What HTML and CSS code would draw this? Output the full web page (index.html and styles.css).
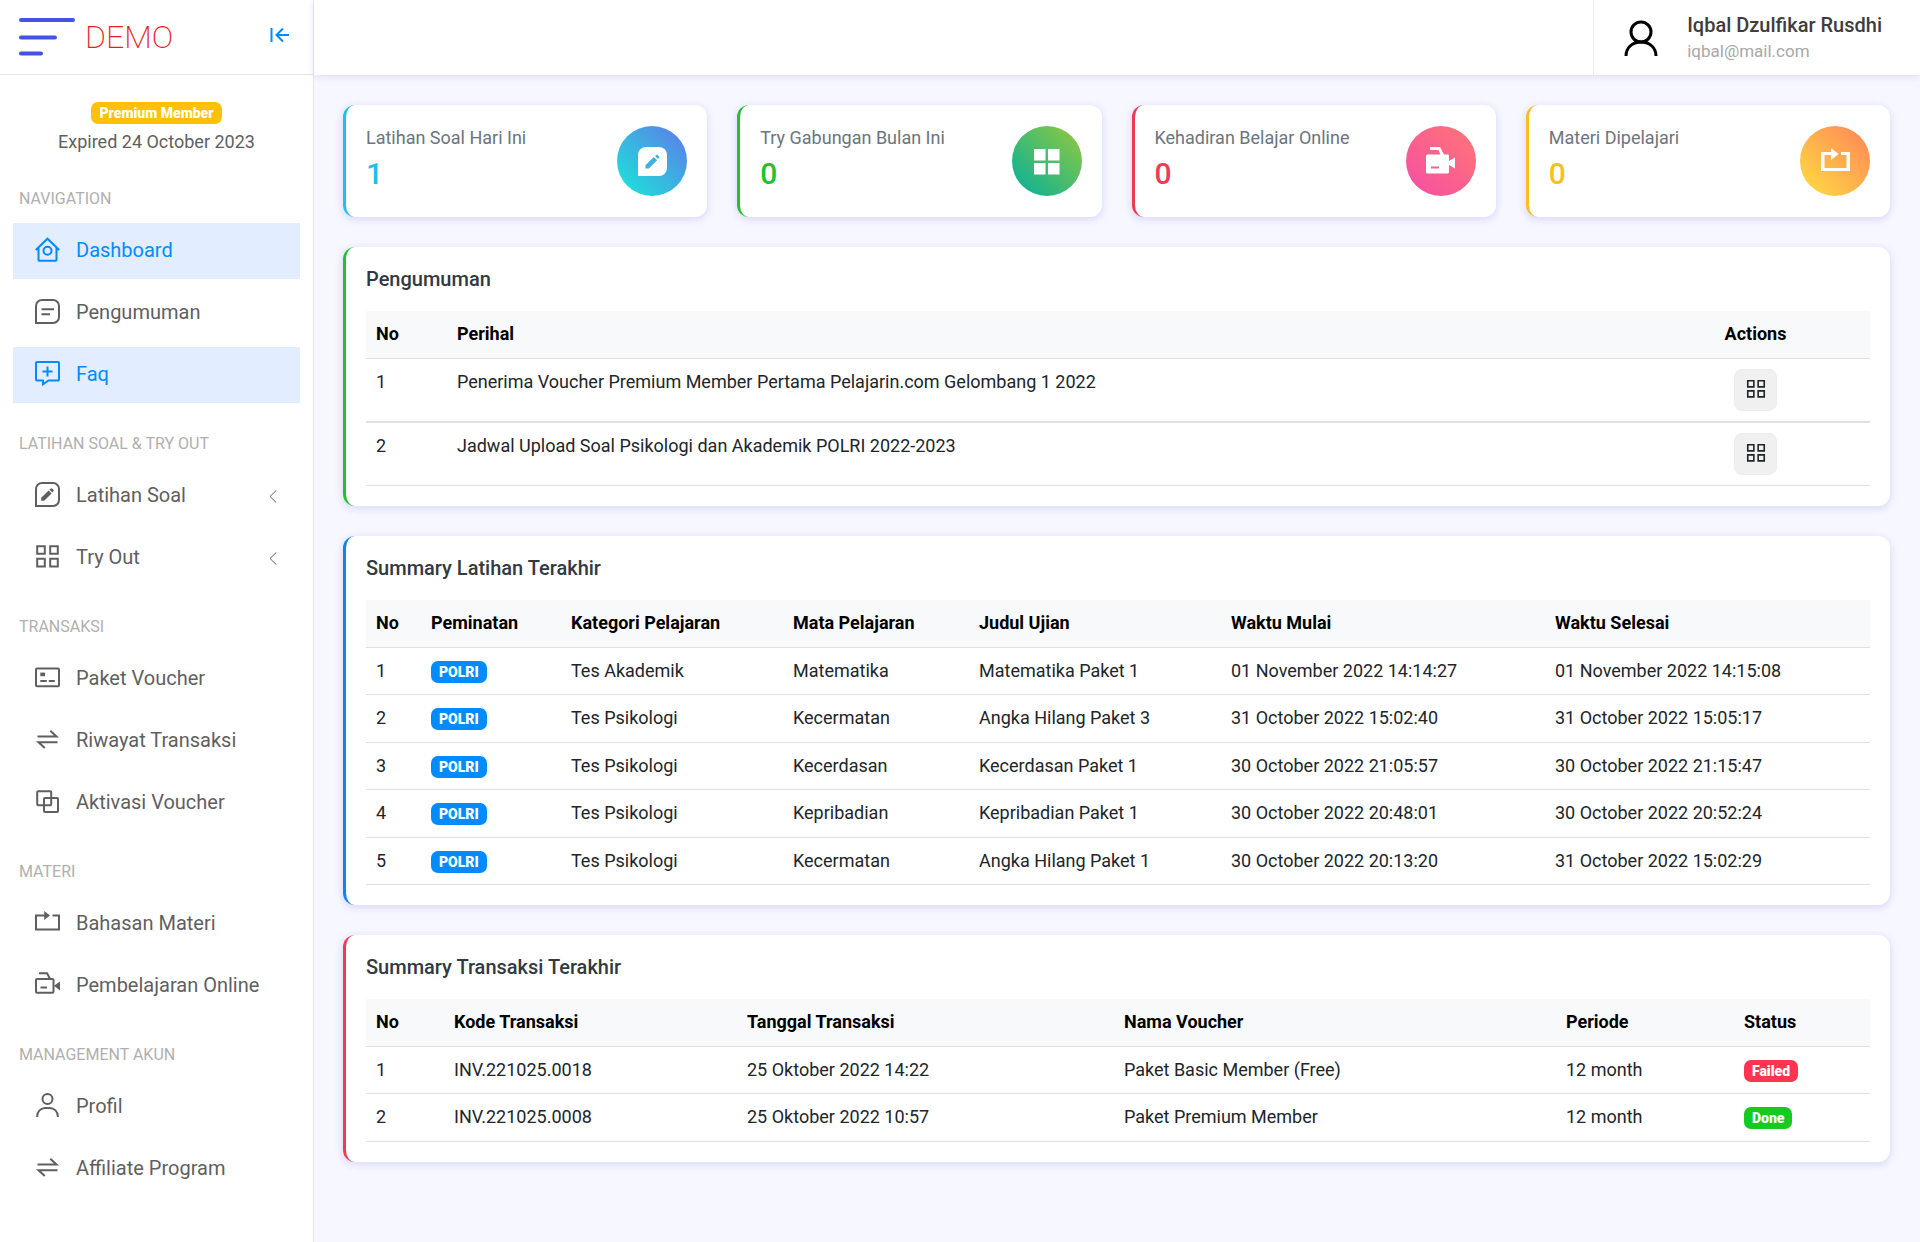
FILE: index.html
```html
<!DOCTYPE html>
<html lang="id">
<head>
<meta charset="utf-8">
<meta name="viewport" content="width=device-width, initial-scale=1">
<title>Dashboard</title>
<link rel="stylesheet" href="styles.css">
</head>
<body>
<svg class="sprite" aria-hidden="true">
  <symbol id="i-home" viewBox="0 0 25 25"><path d="M.8 13 12.500 1.700 24.200 13M3.500 11v12q0 .8.8.8h16.400q.8 0 .8-.8V11"/><circle cx="12.500" cy="13.800" r="4"/></symbol>
  <symbol id="i-note" viewBox="0 0 25 25"><path d="M1 24V7a6 6 0 0 1 6-6h11a6 6 0 0 1 6 6v11a6 6 0 0 1-6 6zM6.500 10.200h12.500M6.500 15.300h8.500"/></symbol>
  <symbol id="i-faq" viewBox="0 0 25 25"><path d="M2 1h21a1 1 0 0 1 1 1v16.500a1 1 0 0 1-1 1h-9.500L8 23.300v-3.800H2a1 1 0 0 1-1-1V2a1 1 0 0 1 1-1zM12.500 5.500v10M7.500 10.500h10"/></symbol>
  <symbol id="i-edit" viewBox="0 0 25 25"><path d="M1 24V7a6 6 0 0 1 6-6h11a6 6 0 0 1 6 6v11a6 6 0 0 1-6 6z"/><path class="solid" d="M6.200 18.800v-3l7.400-7.400 3 3-7.400 7.400zM14.500 7.500 15.900 6.400q.7-.4 1.200 0l1.500 1.500q.5.600 0 1.200l-1.200 1.300z"/></symbol>
  <symbol id="i-grid" viewBox="0 0 25 25"><path d="M2.200 2.200h7.600v7.600H2.200zM15.200 2.200h7.600v7.600h-7.600zM2.200 14.800h7.600v7.600H2.200zM15.200 14.800h7.600v7.600h-7.600z"/></symbol>
  <symbol id="i-card" viewBox="0 0 25 25"><rect x="1" y="3.600" width="23" height="17.600" rx="1"/><path class="solid" d="M5.300 7.600h4.800v3.600H5.300z"/><path d="M5.300 16h6.500M13.800 16h6"/></symbol>
  <symbol id="i-swap" viewBox="0 0 25 25"><path d="M2.500 9.500h19L15.300 3.800M22.500 15.300h-19L9.800 21"/></symbol>
  <symbol id="i-copy" viewBox="0 0 25 25"><rect x="2.200" y="2.200" width="14" height="14" rx="1"/><rect x="9" y="9" width="14" height="14" rx="1"/></symbol>
  <symbol id="i-repeat" viewBox="0 0 25 25"><path d="M10 5.500H1v14h23v-14h-6.500"/><path class="solid" d="m9.200 1 5.800 4.500-5.800 4.500z"/></symbol>
  <symbol id="i-video" viewBox="0 0 25 25"><path d="M4 1.200h8l3 5.600"/><rect x="1" y="7" width="17.500" height="13.800" rx="1"/><path d="M5.500 15.500h6.500"/><path class="solid" d="M19 13.800 25 9.500v9z"/></symbol>
  <symbol id="i-user" viewBox="0 0 25 25"><circle cx="12.500" cy="6" r="5"/><path d="M2.200 24v-1a8 8 0 0 1 8-8h4.600a8 8 0 0 1 8 8v1"/></symbol>
  <symbol id="i-chev" viewBox="0 0 8 13"><path d="M7.300.4 1 6.500l6.300 6.100"/></symbol>
</svg>
<div class="layout">
  <aside class="sidebar">
    <div class="brand">
      <svg class="brand-mark" viewBox="0 0 56 38" aria-hidden="true"><path d="M2 2h52M2 19.500h34M2 35.500h20"/></svg>
      <span class="brand-name">DEMO</span>
      <button class="toggle" type="button" aria-label="Tutup menu"><svg viewBox="0 0 20 16"><path d="M1.500 1v14M19 8H7M13 1.500 6.500 8l6.500 6.500"/></svg></button>
    </div>
    <div class="member">
      <span class="badge warning">Premium Member</span>
      <span>Expired 24 October 2023</span>
    </div>
    <nav class="menu">
      <section><h2>NAVIGATION</h2>
        <a class="active" href="#"><svg><use href="#i-home"/></svg>Dashboard</a>
        <a href="#"><svg><use href="#i-note"/></svg>Pengumuman</a>
        <a class="active" href="#"><svg><use href="#i-faq"/></svg>Faq</a>
      </section>
      <section><h2>LATIHAN SOAL &amp; TRY OUT</h2>
        <a href="#"><svg><use href="#i-edit"/></svg>Latihan Soal<svg class="chev"><use href="#i-chev"/></svg></a>
        <a href="#"><svg><use href="#i-grid"/></svg>Try Out<svg class="chev"><use href="#i-chev"/></svg></a>
      </section>
      <section><h2>TRANSAKSI</h2>
        <a href="#"><svg><use href="#i-card"/></svg>Paket Voucher</a>
        <a href="#"><svg><use href="#i-swap"/></svg>Riwayat Transaksi</a>
        <a href="#"><svg><use href="#i-copy"/></svg>Aktivasi Voucher</a>
      </section>
      <section><h2>MATERI</h2>
        <a href="#"><svg><use href="#i-repeat"/></svg>Bahasan Materi</a>
        <a href="#"><svg><use href="#i-video"/></svg>Pembelajaran Online</a>
      </section>
      <section><h2>MANAGEMENT AKUN</h2>
        <a href="#"><svg><use href="#i-user"/></svg>Profil</a>
        <a href="#"><svg><use href="#i-swap"/></svg>Affiliate Program</a>
      </section>
    </nav>
  </aside>
  <div class="page">
    <header class="topbar">
      <a class="profile" href="#">
        <svg viewBox="0 0 34 36" aria-hidden="true"><circle cx="17" cy="12" r="10"/><path d="M2 36c0-8 6-14 15-14s15 6 15 14"/></svg>
        <span class="who"><span class="name">Iqbal Dzulfikar Rusdhi</span><span class="mail">iqbal@mail.com</span></span>
      </a>
    </header>
    <main class="content">
      <div class="stats">
        <div class="card stat info"><div><p>Latihan Soal Hari Ini</p><strong>1</strong></div>
          <span class="disc"><svg viewBox="0 0 29 29"><path d="M0 29V8a8 8 0 0 1 8-8h13a8 8 0 0 1 8 8v13a8 8 0 0 1-8 8z"/><path class="cut" d="M7.500 21.500v-3.300l8.300-8.300 3.300 3.300-8.300 8.300zM17 9l2-1.600 2.600 2.600-1.600 2z"/></svg></span></div>
        <div class="card stat success"><div><p>Try Gabungan Bulan Ini</p><strong>0</strong></div>
          <span class="disc"><svg viewBox="0 0 29 29"><path d="M2 2h11.500v11.500H2zM16 2h11.500v11.500H16zM2 16h11.500v11.500H2zM16 16h11.500v11.500H16z"/></svg></span></div>
        <div class="card stat danger"><div><p>Kehadiran Belajar Online</p><strong>0</strong></div>
          <span class="disc"><svg viewBox="0 0 29 29"><path d="M4 0h10l4 7.500h4a1 1 0 0 1 1 1V14l6-3.500v11L23 18v7a1.500 1.500 0 0 1-1.500 1.500h-20A1.500 1.500 0 0 1 0 25V9a1.500 1.500 0 0 1 1.500-1.500h13L12.500 3H4z"/><path class="cut" d="M5 19.500h8v2H5z"/></svg></span></div>
        <div class="card stat warn"><div><p>Materi Dipelajari</p><strong>0</strong></div>
          <span class="disc"><svg viewBox="0 0 29 29"><path d="M0 5h10V1l7.500 6-7.500 6V8H3.500v13h22V8H20V5h9v19H0z"/></svg></span></div>
      </div>

      <section class="card success">
        <h1>Pengumuman</h1>
        <table class="notices">
          <colgroup><col style="width:81px"><col style="width:1194px"><col style="width:229px"></colgroup>
          <thead><tr><th>No</th><th>Perihal</th><th class="center">Actions</th></tr></thead>
          <tbody>
            <tr><td>1</td><td>Penerima Voucher Premium Member Pertama Pelajarin.com Gelombang 1 2022</td><td class="center"><button class="action" type="button" aria-label="Detail"><svg><use href="#i-grid"/></svg></button></td></tr>
            <tr><td>2</td><td>Jadwal Upload Soal Psikologi dan Akademik POLRI 2022-2023</td><td class="center"><button class="action" type="button" aria-label="Detail"><svg><use href="#i-grid"/></svg></button></td></tr>
          </tbody>
        </table>
      </section>

      <section class="card primary">
        <h1>Summary Latihan Terakhir</h1>
        <table>
          <colgroup><col style="width:55px"><col style="width:140px"><col style="width:222px"><col style="width:186px"><col style="width:252px"><col style="width:324px"><col style="width:325px"></colgroup>
          <thead><tr><th>No</th><th>Peminatan</th><th>Kategori Pelajaran</th><th>Mata Pelajaran</th><th>Judul Ujian</th><th>Waktu Mulai</th><th>Waktu Selesai</th></tr></thead>
          <tbody>
            <tr><td>1</td><td><span class="badge blue">POLRI</span></td><td>Tes Akademik</td><td>Matematika</td><td>Matematika Paket 1</td><td>01 November 2022 14:14:27</td><td>01 November 2022 14:15:08</td></tr>
            <tr><td>2</td><td><span class="badge blue">POLRI</span></td><td>Tes Psikologi</td><td>Kecermatan</td><td>Angka Hilang Paket 3</td><td>31 October 2022 15:02:40</td><td>31 October 2022 15:05:17</td></tr>
            <tr><td>3</td><td><span class="badge blue">POLRI</span></td><td>Tes Psikologi</td><td>Kecerdasan</td><td>Kecerdasan Paket 1</td><td>30 October 2022 21:05:57</td><td>30 October 2022 21:15:47</td></tr>
            <tr><td>4</td><td><span class="badge blue">POLRI</span></td><td>Tes Psikologi</td><td>Kepribadian</td><td>Kepribadian Paket 1</td><td>30 October 2022 20:48:01</td><td>30 October 2022 20:52:24</td></tr>
            <tr><td>5</td><td><span class="badge blue">POLRI</span></td><td>Tes Psikologi</td><td>Kecermatan</td><td>Angka Hilang Paket 1</td><td>30 October 2022 20:13:20</td><td>31 October 2022 15:02:29</td></tr>
          </tbody>
        </table>
      </section>

      <section class="card danger">
        <h1>Summary Transaksi Terakhir</h1>
        <table>
          <colgroup><col style="width:78px"><col style="width:293px"><col style="width:377px"><col style="width:442px"><col style="width:178px"><col style="width:136px"></colgroup>
          <thead><tr><th>No</th><th>Kode Transaksi</th><th>Tanggal Transaksi</th><th>Nama Voucher</th><th>Periode</th><th>Status</th></tr></thead>
          <tbody>
            <tr><td>1</td><td>INV.221025.0018</td><td>25 Oktober 2022 14:22</td><td>Paket Basic Member (Free)</td><td>12 month</td><td><span class="badge red">Failed</span></td></tr>
            <tr><td>2</td><td>INV.221025.0008</td><td>25 Oktober 2022 10:57</td><td>Paket Premium Member</td><td>12 month</td><td><span class="badge green">Done</span></td></tr>
          </tbody>
        </table>
      </section>
    </main>
  </div>
</div>
</body>
</html>
```
FILE: styles.css
```css
* { box-sizing: border-box; }
body {
  margin: 0;
  background: #f7f7ff;
  color: #212529;
  font: 400 18px/26px Roboto, "Liberation Sans", sans-serif;
}
h1, h2, p { margin: 0; }
a { color: inherit; text-decoration: none; }
button { font: inherit; cursor: pointer; }
svg { display: block; flex: none; fill: none; stroke: currentColor; stroke-width: 2; }
.solid { fill: currentColor; stroke: none; }
.sprite { display: none; }

.layout { display: flex; min-height: 100vh; }

/* Sidebar */
.sidebar {
  flex: none;
  width: 314px;
  background: #fff;
  border-right: 1px solid #e4e4f4;
}
.brand {
  display: flex;
  align-items: center;
  height: 75px;
  padding: 0 20px 0 19px;
  border-bottom: 1px solid #e4e4e4;
}
.brand-mark { width: 56px; height: 38px; color: #4353ea; stroke-width: 4; stroke-linecap: round; }
.brand-name {
  margin-left: 10px;
  color: #e71e1e;
  font-size: 32px;
  font-weight: 200;
  line-height: 40px;
}
.toggle { margin: 0 3px 4px auto; padding: 0; border: 0; background: none; color: #008cff; }
.toggle svg { width: 20px; height: 16px; }
.member {
  display: flex;
  flex-direction: column;
  align-items: center;
  gap: 5px;
  padding: 27px 0 34px;
  color: #5f5f5f;
}
.menu { padding: 0 13px; }
.menu section { display: flex; flex-direction: column; gap: 6px; margin-bottom: 31px; }
.menu h2 {
  margin-bottom: 8px;
  padding-left: 6px;
  color: #b0afaf;
  font-size: 16px;
  font-weight: 400;
  line-height: 20px;
}
.menu a {
  display: flex;
  align-items: center;
  gap: 16px;
  height: 56px;
  padding: 0 23px 2px 22px;
  color: #5f5f5f;
  font-size: 20px;
}
.menu svg { width: 25px; height: 25px; margin-bottom: 2px; }
.menu .chev { width: 8px; height: 13px; margin: 2px 0 0 auto; stroke-width: 1; }
.menu a.active { background: #e2edff; color: #008cff; }

/* Top bar */
.page { flex: 1; min-width: 0; }
.topbar {
  display: flex;
  justify-content: flex-end;
  height: 75px;
  background: #fff;
  box-shadow: 0 2px 7px rgba(206, 206, 238, .6);
}
.profile {
  display: flex;
  align-items: center;
  gap: 29px;
  height: 75px;
  padding: 0 38px 0 30px;
  border-left: 1px solid #ededed;
}
.profile svg { width: 34px; height: 36px; color: #000; stroke-width: 3; }
.who { display: flex; flex-direction: column; }
.name { color: #413c3c; font-size: 20px; font-weight: 500; }
.mail { color: #a9a8a8; font-size: 17px; }

/* Cards */
.content { display: flex; flex-direction: column; gap: 30px; padding: 30px; padding-left: 29px; }
.stats { display: grid; grid-template-columns: repeat(4, 1fr); gap: 30px; }
.card {
  padding: 20px;
  background: #fff;
  border-left: 3px solid;
  border-radius: 12px;
  box-shadow: 0 2px 7px rgba(218, 218, 253, .65), 0 2px 7px rgba(206, 206, 238, .54);
}
.card h1 { margin-bottom: 20px; color: #32393f; font-size: 20px; font-weight: 500; line-height: 24px; }
.card.info { border-color: #22c0e8; }
.card.success { border-color: #20c22f; }
.card.danger { border-color: #ee3b53; }
.card.warn { border-color: #f8c01f; }
.card.primary { border-color: #0d87ee; }
.stat { display: flex; justify-content: space-between; align-items: center; }
.stat p { color: #6c757d; }
.stat strong { display: block; font-size: 30px; font-weight: 500; line-height: 46px; }
.info strong { color: #22c0e8; }
.success strong { color: #20c22f; }
.danger strong { color: #ee3b53; }
.warn strong { color: #f8c01f; }
.disc { display: grid; place-items: center; width: 70px; height: 70px; border-radius: 50%; }
.disc svg { width: 29px; height: 29px; fill: #fff; stroke: none; }
.info .disc { background: linear-gradient(45deg, #17ead9, #6078ea); }
.success .disc { background: linear-gradient(45deg, #00b09b, #96c93d); }
.danger .disc { background: linear-gradient(45deg, #f54ea2, #ff7676); }
.warn .disc { background: linear-gradient(45deg, #ffdf40, #ff8359); }
.info .cut { fill: #3db1e0; }
.danger .cut { fill: #fa5f8e; }

/* Tables */
table { width: 100%; table-layout: fixed; border-collapse: separate; border-spacing: 0; }
th, td { padding: 10px; border-bottom: 1px solid #dee0e2; text-align: left; vertical-align: top; }
th { height: 48px; background: #f8f9fb; color: #000; font-weight: 700; }
tbody tr:nth-child(even) { height: 48px; }
.center { text-align: center; }
.notices tbody tr:first-child td { border-bottom-width: 2px; }
.action {
  display: block;
  width: 43px;
  height: 42px;
  margin: 0 auto;
  padding: 0 0 2px;
  border: 1px solid #ececec;
  border-radius: 8px;
  background: #f0f0f0;
  color: #212529;
}
.action svg { width: 20px; height: 20px; margin: 0 auto; }

.badge {
  display: inline-block;
  padding: 0 8px;
  border-radius: 7px;
  color: #fff;
  font-size: 14px;
  font-weight: 900;
  line-height: 22px;
}
td .badge { display: block; width: fit-content; margin: 3px 0 1px; }
.warning { background: #ffc107; }
.blue { background: #008cff; }
.red { background: #fd3550; }
.green { background: #15ca20; }
```
